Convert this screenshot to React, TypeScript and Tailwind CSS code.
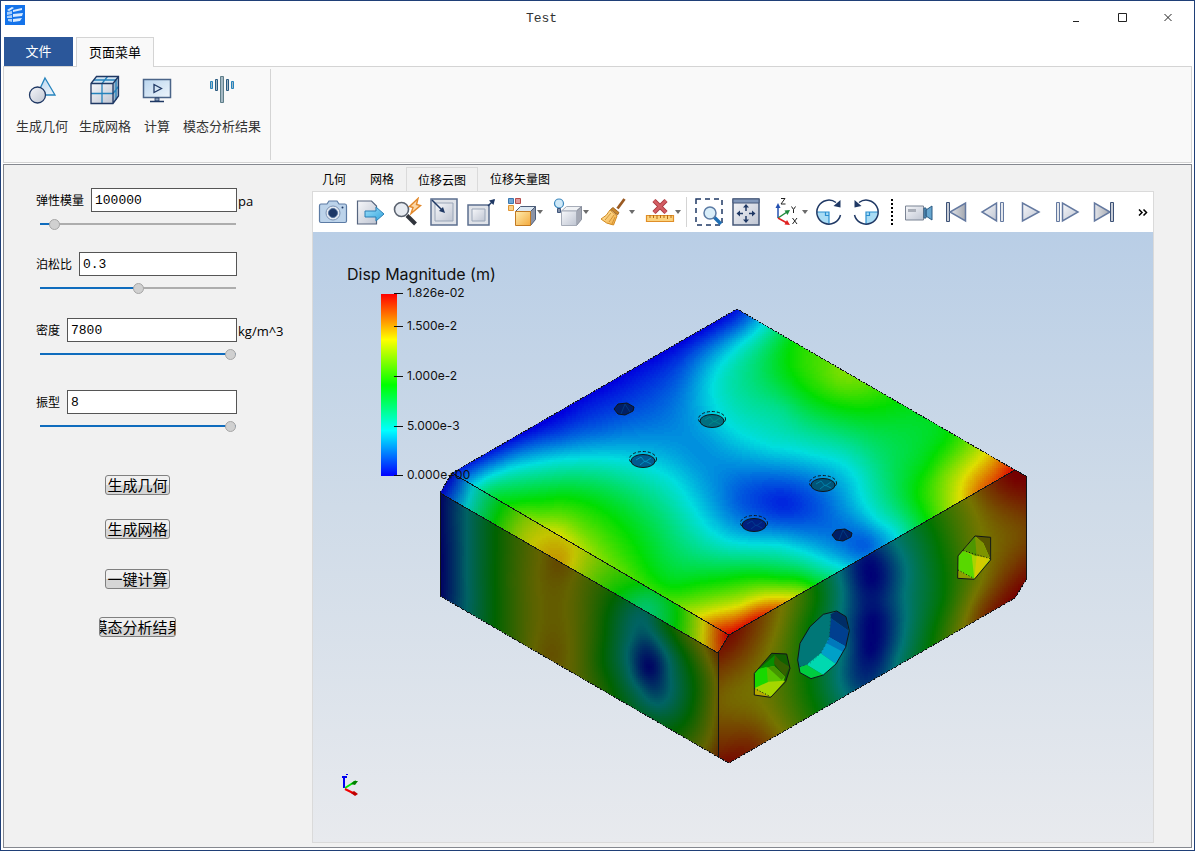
import { useState } from "react"
import type { ReactNode } from "react"

type Sample = [number, number, number]

interface Face {
  id: string
  outline: string
  box: [number, number, number, number]
  light: number
  samples: Sample[]
}

const LEVELS = 160

// Displacement samples: x, y, value in 0..1 (blue to red)
const TOP: Sample[] = [
  [737, 309, 0.02], [700, 331, 0], [640, 365, 0], [580, 400, 0], [520, 434, 0], [470, 462, 0.02], [453, 472, 0.03],
  [660, 358, 0.01], [600, 393, 0.01], [555, 420, 0.01],
  [720, 367, 0.25], [713, 387, 0.25], [723, 417, 0.25], [740, 433, 0.25], [762, 326, 0.25], [740, 345, 0.25],
  [773, 447, 0.25], [813, 455, 0.25], [843, 464, 0.25], [857, 480, 0.25], [863, 500, 0.25], [877, 520, 0.25], [897, 538, 0.25],
  [730, 541, 0.25], [780, 545, 0.25], [813, 555, 0.25], [843, 567, 0.25], [473, 487, 0.25], [513, 468, 0.25], [557, 460, 0.25],
  [600, 458, 0.25], [637, 463, 0.25], [673, 480, 0.25], [693, 507, 0.25], [713, 532, 0.25],
  [513, 503, 0.5], [563, 498, 0.5], [597, 507, 0.5], [622, 527, 0.5], [640, 553, 0.5], [670, 587, 0.5], [697, 583, 0.5], [740, 577, 0.5],
  [780, 578, 0.5], [815, 584, 0.48], [793, 343, 0.5], [792, 373, 0.5], [810, 393, 0.5], [847, 408, 0.5], [897, 402, 0.5],
  [947, 437, 0.5], [927, 467, 0.5], [917, 497, 0.5], [927, 520, 0.5],
  [815, 356, 0.57], [827, 362, 0.6], [843, 374, 0.64], [863, 385, 0.6], [990, 454, 0.78], [970, 470, 0.75], [960, 497, 0.75],
  [997, 473, 0.9], [1013, 470, 0.99], [977, 490, 0.86], [943, 475, 0.62],
  [783, 503, 0.04], [820, 505, 0.1], [740, 500, 0.1], [783, 482, 0.1], [783, 522, 0.1],
  [660, 400, 0.1], [600, 400, 0.03], [600, 430, 0.11], [640, 430, 0.14], [700, 450, 0.16], [560, 438, 0.1], [680, 380, 0.11],
  [700, 350, 0.1], [737, 325, 0.1], [740, 465, 0.16], [850, 535, 0.12], [865, 546, 0.1], [840, 510, 0.15], [720, 490, 0.15],
  [557, 535, 0.75], [523, 519, 0.65], [603, 560, 0.64], [580, 528, 0.62], [540, 515, 0.6],
  [740, 606, 0.75], [703, 616, 0.76], [717, 624, 0.88], [729, 635, 1], [780, 597, 0.75], [803, 591, 0.64], [777, 607, 0.88], [755, 616, 0.94],
  [660, 520, 0.38], [680, 545, 0.37], [720, 560, 0.37], [760, 561, 0.37], [500, 460, 0.13], [600, 480, 0.37], [550, 479, 0.37],
  [492, 488, 0.37], [760, 380, 0.38], [830, 430, 0.37], [880, 460, 0.37], [900, 490, 0.42], [780, 410, 0.34],
]

const CHAMFER: Sample[] = [
  [440, 493, 0], [453, 474, 0.02], [458, 490, 0.12], [468, 503, 0.25], [473, 487, 0.25], [497, 518, 0.5], [504, 504, 0.5],
  [520, 533, 0.68], [540, 543, 0.76], [563, 560, 0.8], [557, 535, 0.75], [577, 560, 0.73], [597, 575, 0.62], [603, 562, 0.63],
  [623, 590, 0.5], [640, 583, 0.5], [647, 605, 0.37], [663, 612, 0.42], [652, 592, 0.44], [677, 615, 0.5], [693, 623, 0.65],
  [703, 631, 0.75], [720, 640, 0.93], [718, 651, 0.9], [728, 636, 1],
]

const LEFT: Sample[] = [
  [440, 493, 0], [440, 545, 0], [440, 596, 0], [452, 550, 0.1], [467, 510, 0.25], [467, 560, 0.25], [467, 610, 0.25],
  [496, 528, 0.5], [495, 580, 0.5], [495, 625, 0.5], [520, 545, 0.65], [520, 600, 0.66], [520, 640, 0.66], [542, 560, 0.76],
  [558, 564, 0.82], [553, 605, 0.77], [550, 654, 0.8], [583, 578, 0.7], [580, 620, 0.69], [578, 672, 0.7],
  [615, 597, 0.5], [605, 635, 0.5], [603, 663, 0.5], [611, 685, 0.5], [650, 717, 0.4], [680, 730, 0.52], [693, 700, 0.5], [693, 680, 0.5],
  [677, 642, 0.5], [663, 625, 0.45], [631, 640, 0.25], [645, 615, 0.27], [648, 667, 0], [657, 705, 0.25], [629, 667, 0.25], [640, 690, 0.25],
  [670, 675, 0.25], [662, 647, 0.25], [707, 680, 0.65], [707, 657, 0.74], [717, 657, 0.86], [717, 753, 0.88], [707, 743, 0.75], [717, 703, 0.77],
  [645, 645, 0.12], [652, 687, 0.12],
]

const RIGHT: Sample[] = [
  [730, 635, 0.98], [730, 761, 0.98], [720, 657, 0.93], [720, 703, 0.8], [720, 750, 0.92], [733, 693, 0.78], [750, 630, 0.9], [750, 740, 0.9],
  [790, 603, 0.7], [780, 627, 0.73], [772, 660, 0.72], [767, 700, 0.73], [793, 722, 0.66], [817, 600, 0.5], [809, 627, 0.5], [808, 660, 0.5],
  [817, 703, 0.48], [842, 588, 0.25], [840, 620, 0.25], [843, 647, 0.25], [843, 690, 0.25], [870, 560, 0.02], [872, 580, 0], [873, 620, 0],
  [870, 650, 0], [862, 680, 0.1], [885, 600, 0.1], [857, 610, 0.11], [885, 552, 0.14], [905, 593, 0.25], [905, 630, 0.25], [897, 660, 0.25],
  [897, 545, 0.25], [930, 523, 0.5], [943, 567, 0.5], [943, 600, 0.5], [931, 643, 0.5], [970, 505, 0.74], [978, 540, 0.73], [979, 580, 0.73],
  [963, 625, 0.74], [1017, 480, 1], [1026, 477, 1], [1026, 533, 0.85], [1002, 535, 0.8], [1023, 580, 0.97], [1013, 600, 1], [985, 613, 0.9],
  [990, 495, 0.87], [1026, 505, 0.92], [1002, 565, 0.83],
]

const FACES: Face[] = [
  { id: "left", outline: "440,493 718,653 718,757 440,596", box: [440, 492, 720, 758], light: 0.39, samples: LEFT },
  {
    id: "right",
    outline: "729,635 1015,470 1026,476 1026,580 1015,598 729,763 718,757 718,653",
    box: [718, 470, 1028, 764],
    light: 0.46,
    samples: RIGHT,
  },
  { id: "chamfer", outline: "452,473 729,635 718,653 440,493", box: [440, 472, 730, 654], light: 0.77, samples: CHAMFER },
  { id: "top", outline: "737,309 1015,470 729,635 452,473", box: [452, 308, 1018, 636], light: 0.87, samples: TOP },
]

function rainbow(v: number, light: number) {
  const t = Math.min(1, Math.max(0, v)) * 4
  const r = Math.min(1, Math.max(0, t - 2))
  const g = t < 1 ? t : t > 3 ? 4 - t : 1
  const b = Math.min(1, Math.max(0, 2 - t))
  return `rgb(${[r, g, b].map((c) => Math.round(c * 255 * light)).join(",")})`
}

// Thin plate spline through the samples, slightly smoothed
function fitSurface(samples: Sample[]) {
  const pts = samples.map(([x, y]) => [(x - 730) / 100, (y - 530) / 100])
  const n = pts.length
  const size = n + 3
  const kernel = (d2: number) => (d2 > 0 ? 0.5 * d2 * Math.log(d2) : 0)
  const m = Array.from({ length: size }, () => new Array<number>(size + 1).fill(0))
  for (let i = 0; i < n; i++) {
    for (let j = 0; j < n; j++) {
      m[i][j] = kernel((pts[i][0] - pts[j][0]) ** 2 + (pts[i][1] - pts[j][1]) ** 2)
    }
    m[i][i] += 0.005
    const base = [1, pts[i][0], pts[i][1]]
    base.forEach((v, k) => {
      m[i][n + k] = v
      m[n + k][i] = v
    })
    m[i][size] = samples[i][2]
  }
  for (let c = 0; c < size; c++) {
    let p = c
    for (let r = c + 1; r < size; r++) if (Math.abs(m[r][c]) > Math.abs(m[p][c])) p = r
    ;[m[c], m[p]] = [m[p], m[c]]
    for (let r = 0; r < size; r++) {
      if (r === c) continue
      const f = m[r][c] / m[c][c]
      if (f === 0) continue
      for (let k = c; k <= size; k++) m[r][k] -= f * m[c][k]
    }
  }
  const w = m.map((row, i) => row[size] / row[i])
  return (px: number, py: number) => {
    const x = (px - 730) / 100
    const y = (py - 530) / 100
    let v = w[n] + w[n + 1] * x + w[n + 2] * y
    for (let i = 0; i < n; i++) v += w[i] * kernel((x - pts[i][0]) ** 2 + (y - pts[i][1]) ** 2)
    return v
  }
}

// One path per colour level, built from horizontal runs two units tall
function buildBands({ box, light, samples }: Face) {
  const at = fitSurface(samples)
  const paths = new Map<number, string>()
  for (let y = box[1]; y < box[3]; y += 2) {
    let start = box[0]
    let level = -1
    for (let x = box[0]; x <= box[2]; x += 2) {
      const next = x >= box[2] ? -2 : Math.round(Math.min(1, Math.max(0, at(x + 1, y + 1))) * LEVELS)
      if (next === level) continue
      if (level >= 0) paths.set(level, (paths.get(level) ?? "") + `M${start} ${y}H${x}V${y + 2}H${start}z`)
      start = x
      level = next
    }
  }
  return [...paths].map(([level, d]) => ({ d, fill: rainbow(level / LEVELS, light) }))
}

const SHADED = FACES.map((face) => ({ ...face, bands: buildBands(face) }))

const TICKS = [
  { y: 293, text: "1.826e-02" },
  { y: 326, text: "1.500e-2" },
  { y: 376, text: "1.000e-2" },
  { y: 426, text: "5.000e-3" },
  { y: 475, text: "0.000e+00" },
]

function RoundHole({ x, y, fill, shine }: { x: number; y: number; fill: string; shine: string }) {
  return (
    <g stroke="#101418">
      <ellipse cx={x} cy={y - 1} rx="13.5" ry="7.5" fill="none" strokeDasharray="3 2" />
      <ellipse cx={x} cy={y + 1} rx="12" ry="6.5" fill={fill} />
      <path d={`M${x - 7} ${y}l5 -3 4 5 6 -4 M${x - 3} ${y + 5}l5 -4 6 3`} stroke={shine} fill="none" />
    </g>
  )
}

function SmallHole({ x, y }: { x: number; y: number }) {
  return (
    <g stroke="#101418">
      <path d={`M${x - 10} ${y}l4 -5 9 -1 7 4 -1 4 -8 4 -7 -1z`} fill="#001f66" />
      <path d={`M${x - 3} ${y + 5}l4 -10 5 8`} fill="none" stroke="#003a80" />
    </g>
  )
}

function Model() {
  return (
    <svg viewBox="313 232 840 608" className="block w-full" role="img" aria-label="Disp Magnitude">
      <defs>
        <linearGradient id="legend" x1="0" y1="1" x2="0" y2="0">
          <stop offset="0" stopColor="#00f" />
          <stop offset="0.25" stopColor="#0ff" />
          <stop offset="0.5" stopColor="#0f0" />
          <stop offset="0.75" stopColor="#ff0" />
          <stop offset="1" stopColor="#f00" />
        </linearGradient>
        {SHADED.map((face) => (
          <clipPath key={face.id} id={`clip-${face.id}`}>
            <polygon points={face.outline} />
          </clipPath>
        ))}
      </defs>

      {SHADED.map((face) => (
        <g key={face.id} clipPath={`url(#clip-${face.id})`} shapeRendering="crispEdges">
          {face.bands.map((band) => (
            <path key={band.fill} d={band.d} fill={band.fill} />
          ))}
        </g>
      ))}

      {/* Feature edges */}
      <g fill="none" stroke="#101418" shapeRendering="crispEdges">
        <path d="M452 473L729 635L718 653L440 493V596M718 653V757M729 635L1015 470L1026 476V580" />
        <path d="M440 493L452 473L737 309L1015 470M1026 580L1015 598L729 763L718 757L440 596" strokeDasharray="2 1" />
      </g>

      <SmallHole x={624} y={409} />
      <RoundHole x={712} y={420} fill="#006f80" shine="#008a88" />
      <RoundHole x={643} y={460} fill="#005a90" shine="#0090c0" />
      <RoundHole x={823} y={484} fill="#00557a" shine="#0080a8" />
      <RoundHole x={754} y={524} fill="#001f80" shine="#003a90" />
      <SmallHole x={842} y={535} />

      {/* Side bores */}
      <g transform="translate(700 560) scale(0.3333)">
        <path d="M215 280L260 282L270 325L257 365L222 348L175 328z" fill="#126000" />
        <path d="M175 328L225 285L222 348z" fill="#078c00" />
        <path d="M225 285L222 310L255 350L268 320L240 302z" fill="#356000" />
        <path d="M175 328L222 318L255 350L250 365L212 412L163 385V340z" fill="#58c400" />
        <path d="M175 328L200 320L206 400L163 385V340z" fill="#18d800" />
        <path d="M203 322L222 318L255 350L245 360z" fill="#449600" />
        <path d="M163 385L206 365L255 362L212 412z" fill="#a5d600" />
        <path d="M163 385L212 412L163 405z" fill="#b6aa00" />
        <path d="M163 385L212 410" stroke="#101418" strokeWidth="3" strokeDasharray="3 6" />
        <path
          d="M215 280L260 282L270 325L257 365L212 412L163 405V340z"
          fill="none"
          stroke="#101418"
          strokeWidth="3"
        />

        <path d="M370 163L410 153L438 170L448 212L437 262L408 312L370 345L333 356L300 338L293 300L300 250L330 200z" fill="#007777" />
        <path d="M392 163L410 153L438 170L446 212L393 175z" fill="#002d66" />
        <path d="M393 175L446 212L438 260L388 232z" fill="#003f8f" />
        <path d="M388 232L438 260L408 312L362 280z" fill="#00a0c8" />
        <path d="M388 232L438 260L430 276L380 250z" fill="#0078bc" />
        <path d="M362 280L408 312L370 345L320 314z" fill="#00d8b0" />
        <path d="M320 314L370 345L333 356L300 338L298 322z" fill="#00cc40" />
        <path d="M300 320L330 310L362 280L388 235L392 163" fill="none" stroke="#104040" strokeWidth="2" strokeDasharray="3 8" />
        <path
          d="M370 163L410 153L438 170L448 212L437 262L408 312L370 345L333 356L300 338L293 300L300 250L330 200z"
          fill="none"
          stroke="#101418"
          strokeWidth="3"
        />
      </g>
      <g transform="translate(730 300) scale(0.3333)">
        <path d="M735 708L782 712V780L733 838L683 835L684 768z" fill="#9ad000" />
        <path d="M735 708L782 712L780 775L760 730z" fill="#575500" />
        <path d="M735 708L760 730L780 775L735 768L700 752z" fill="#7e9400" />
        <path d="M735 708L740 768L700 752z" fill="#4e9600" />
        <path d="M700 752L735 768L780 775L733 838L684 810V768z" fill="#a8d400" />
        <path d="M700 752L725 765L733 838L684 810V768z" fill="#58d800" />
        <path d="M740 768L780 775L733 838z" fill="#d2cc00" />
        <path d="M684 810L733 838L683 835z" fill="#8ba200" />
        <path d="M684 810L733 836M700 752L780 776" stroke="#101418" strokeWidth="3" strokeDasharray="3 6" />
        <path d="M735 708L782 712V780L733 838L683 835L684 768z" fill="none" stroke="#101418" strokeWidth="3" />
      </g>

      {/* Colour legend */}
      <text x="347" y="280" fontSize="16" fill="#101010" className="font-['Inter',sans-serif]">
        Disp Magnitude (m)
      </text>
      <rect x="381" y="294" width="16" height="182" fill="url(#legend)" />
      {TICKS.map((tick) => (
        <g key={tick.text}>
          <path d={`M394 ${tick.y + 0.5}H403`} stroke="#101010" />
          <text x="407" y={tick.y + 4} fontSize="12" fill="#101010" className="font-['Inter',sans-serif]">
            {tick.text}
          </text>
        </g>
      ))}

      {/* Orientation triad */}
      <path d="M344 788V776M342 777h5M347 774v1" stroke="#0000f0" strokeWidth="2" />
      <path d="M345 788l11 -7" stroke="#00e800" strokeWidth="2" />
      <path d="M351 784l3 -3 4 0 -3 4z" fill="#008000" />
      <path d="M345 789l10 5" stroke="#f00000" strokeWidth="2" />
      <path d="M351 793l3 -2 4 3 -3 2z" fill="#c00000" />
    </svg>
  )
}

function Icon({ children, size = 30 }: { children: ReactNode; size?: number }) {
  return (
    <svg width={size} height={size} viewBox="0 0 30 30" fill="none" aria-hidden="true" className="shrink-0">
      {children}
    </svg>
  )
}

const NAVY = "#1f3864"

function SharedGradients() {
  return (
    <svg width="0" height="0" aria-hidden="true" className="absolute">
      <defs>
        <linearGradient id="steel" x1="0" y1="0" x2="1" y2="1">
          <stop offset="0" stopColor="#f6f7fa" />
          <stop offset="1" stopColor="#bfc5d2" />
        </linearGradient>
        <linearGradient id="sky" x1="0" y1="0" x2="1" y2="1">
          <stop offset="0" stopColor="#b9d5ee" />
          <stop offset="1" stopColor="#eef5fb" />
        </linearGradient>
        <linearGradient id="gold" x1="0" y1="0" x2="1" y2="1">
          <stop offset="0" stopColor="#ffedb0" />
          <stop offset="1" stopColor="#f3a93c" />
        </linearGradient>
        <linearGradient id="azure" x1="0" y1="0" x2="1" y2="1">
          <stop offset="0" stopColor="#9fe0fb" />
          <stop offset="1" stopColor="#31a4dc" />
        </linearGradient>
        <linearGradient id="metal" x1="0" y1="0" x2="1" y2="0">
          <stop offset="0" stopColor="#e3e5ea" />
          <stop offset="1" stopColor="#a4a8b0" />
        </linearGradient>
      </defs>
    </svg>
  )
}

const RIBBON = [
  {
    label: "生成几何",
    icon: (
      <>
        <path d="M18 3L28 20H10z" fill="url(#sky)" stroke="#2583bd" strokeWidth="1.3" />
        <circle cx="10.500" cy="20" r="8" fill="url(#steel)" stroke={NAVY} strokeWidth="1.3" />
      </>
    ),
  },
  {
    label: "生成网格",
    icon: (
      <>
        <path d="M1 8.500L6.500 1.500H28.500L23 8.500z" fill="#d3e5f3" />
        <path d="M23 8.500L28.500 1.500V21L23 28.500z" fill="#9cb6ca" />
        <path d="M1 8.500H23V28.500H1z" fill="url(#steel)" />
        <path d="M1 18.500H23L28.500 11.500M12 28.500V8.500L17.500 1.500M4 5H26V25" stroke="#2583bd" strokeWidth="1.3" />
        <path d="M1 8.500L6.500 1.500H28.500V21L23 28.500H1zM1 8.500H23V28.500M23 8.500L28.500 1.500" stroke={NAVY} strokeWidth="1.3" />
      </>
    ),
  },
  {
    label: "计算",
    icon: (
      <>
        <path d="M1.500 4.500H28.500V22.500H1.500z" fill="url(#sky)" stroke="#4a6488" strokeWidth="1.5" />
        <path d="M12 9.500L19.500 13.500L12 17.500z" stroke={NAVY} strokeWidth="1.3" />
        <path d="M13 23H17V26H13z" fill="#8fa3bb" stroke={NAVY} strokeWidth="0.8" />
        <path d="M8 26.500H22" stroke={NAVY} strokeWidth="1.5" />
      </>
    ),
  },
  {
    label: "模态分析结果",
    icon: (
      <g fill="#a5b8c4" strokeWidth="1">
        <path d="M3.500 6.500h2v7h-2z" stroke="#2583bd" />
        <path d="M8.500 4.500h2v11h-2z" stroke="#2a5a80" />
        <path d="M13.500 1.500h3v26h-3z" stroke="#5f7f8a" />
        <path d="M19.500 4.500h2v11h-2z" stroke="#2a5a80" />
        <path d="M24.500 6.500h2v7h-2z" stroke="#2583bd" />
      </g>
    ),
  },
]

interface Tool {
  name: string
  icon: ReactNode
  menu?: boolean
}

const VIEW_TOOLS: Tool[] = [
  {
    name: "Screenshot",
    icon: (
      <>
        <path d="M3 7h6l2-3h8l2 3h6q1.500 0 1.500 2v15q0 1.500-1.500 1.500H3q-1.500 0-1.500-1.500V9q0-2 1.500-2z" fill="#bcd3ea" stroke="#5c7ba4" strokeWidth="1.200" />
        <circle cx="15" cy="16" r="7" fill="#e4eaf2" stroke="#7c93b4" />
        <circle cx="15" cy="16" r="4.500" fill="#1d3766" stroke="#52709c" />
        <circle cx="24.500" cy="10.500" r="1" fill={NAVY} />
      </>
    ),
  },
  {
    name: "Export",
    icon: (
      <>
        <path d="M2.500 4h14l5 5v18h-19z" fill="url(#steel)" stroke="#56657f" strokeWidth="1.200" />
        <path d="M10 14h11v-4l8 7-8 7v-4H10z" fill="url(#azure)" stroke="#2b7fb5" />
      </>
    ),
  },
  {
    name: "Quick zoom",
    icon: (
      <>
        <path d="M15 18.500l8.500 8.500" stroke="#30343c" strokeWidth="4" />
        <circle cx="9.500" cy="12.500" r="7" fill="#e7ebf1" stroke="#5b6370" strokeWidth="1.600" />
        <path d="M26 1.500L17.500 9.500l3.500 1-2 6L28.500 8.500l-4-1z" fill="#fbd7a8" stroke="#e2882a" strokeWidth="1.400" />
      </>
    ),
  },
  {
    name: "Fit inside",
    icon: (
      <>
        <path d="M2 2h26v26H2z" fill="#dfe2e8" stroke="#5c6f8f" strokeWidth="1.500" />
        <path d="M6 6h18v18H6z" fill="url(#steel)" stroke="#9aa6b8" />
        <path d="M3 3l11 11" stroke={NAVY} strokeWidth="1.500" />
        <path d="M16 16l-6-2 4-4z" fill={NAVY} />
      </>
    ),
  },
  {
    name: "Fit outside",
    icon: (
      <>
        <path d="M2 8h21v20H2z" fill="#dfe2e8" stroke="#5c6f8f" strokeWidth="1.500" />
        <path d="M6 12h13v12H6z" fill="url(#steel)" stroke="#9aa6b8" />
        <path d="M22 9l6-6" stroke={NAVY} strokeWidth="1.500" />
        <path d="M29 2l-1.500 6-4.500-4.500z" fill={NAVY} />
      </>
    ),
  },
  {
    name: "Display blocks",
    menu: true,
    icon: (
      <>
        <path d="M1.500 1.500h5v5h-5z" fill="#6fa5d4" stroke="#3a78b0" />
        <path d="M8.500 1.500h5v5h-5z" fill="#e09a9a" stroke="#b54a4a" />
        <path d="M1.500 8.500h5v5h-5z" fill="#f8d08a" stroke="#e09432" />
        <path d="M8.500 14.500l5-5h15l-5 5z" fill="#dde8f2" stroke="#4c5c78" />
        <path d="M23.500 14.500l5-5v13l-5 6z" fill="#8b93a5" stroke="#4c5c78" />
        <path d="M8.500 14.500h15v14h-15z" fill="url(#gold)" stroke="#c37a22" />
      </>
    ),
  },
  {
    name: "Light",
    menu: true,
    icon: (
      <>
        <path d="M8.500 14l5-4.500h15l-5 4.500z" fill="#f0f2f5" stroke="#a6acb8" />
        <path d="M23.500 14l5-4.500v13l-5 6z" fill="#a4a8b4" stroke="#888e9c" />
        <path d="M8.500 14h15v14.500h-15z" fill="url(#steel)" stroke="#a6acb8" />
        <circle cx="6" cy="6.500" r="4.500" fill="#cfe9f8" stroke="#3b87bd" strokeWidth="1.200" />
        <path d="M4.500 11.500h3v4h-3z" fill="#8090a8" stroke={NAVY} strokeWidth="0.800" />
      </>
    ),
  },
  {
    name: "Clean",
    menu: true,
    icon: (
      <>
        <path d="M25.500 2l-7 9.500" stroke="#9a5a22" strokeWidth="2.800" />
        <path d="M14 10.500l6 5-1.500 2.500-7-5.500z" fill="#c8862c" stroke="#8f5614" strokeWidth="0.800" />
        <path d="M11 13l7 6-3.500 9Q7 27 2 22q6-3 9-9z" fill="url(#gold)" stroke="#d28a22" />
        <path d="M6 23l6-7M10 25l5-7M13 27l3-7" stroke="#c8862c" strokeWidth="0.800" />
      </>
    ),
  },
  {
    name: "Clear measurement",
    menu: true,
    icon: (
      <>
        <path d="M9 3.500l12 12M21 3.500l-12 12" stroke="#a8393f" strokeWidth="4.500" />
        <path d="M9 3.500l12 12M21 3.500l-12 12" stroke="#d35d63" strokeWidth="2.500" />
        <path d="M1.500 18.500h27v6h-27z" fill="#fbd27c" stroke="#e08e28" strokeWidth="1.200" />
        <path d="M5 18v3M8.500 18v3M12 18v4M15.500 18v3M19 18v3M22.500 18v4M26 18v3" stroke="#b66a12" />
      </>
    ),
  },
]

const CAMERA_TOOLS: Tool[] = [
  {
    name: "Zoom box",
    icon: (
      <>
        <path d="M2 2h26v26H2z" stroke={NAVY} strokeWidth="1.500" strokeDasharray="5 4" />
        <path d="M20 20l7 7" stroke="#1f6fb5" strokeWidth="3.500" />
        <circle cx="16" cy="16" r="6" fill="#d9eef9" stroke="#5c7ba4" strokeWidth="1.500" />
      </>
    ),
  },
  {
    name: "Fit window",
    icon: (
      <>
        <path d="M2 2h26v26H2z" fill="url(#steel)" stroke="#47597a" strokeWidth="1.500" />
        <path d="M2 2h26v4H2z" fill="#8298ba" stroke="#47597a" />
        <path d="M15 9v5M15 19v5M7 16.500h5M18 16.500h5" stroke={NAVY} strokeWidth="1.500" />
        <path d="M15 7l3 3.500h-6zM15 26l3-3.500h-6zM5.500 16.500l3.500-3v6zM24.500 16.500l-3.500-3v6z" fill={NAVY} />
      </>
    ),
  },
  {
    name: "Axis view",
    menu: true,
    icon: (
      <>
        <path d="M6 21V9" stroke="#2350b0" strokeWidth="1.500" />
        <path d="M6 6l2.500 5h-5z" fill="#2350b0" />
        <path d="M6 21l9-6" stroke="#1d8a3c" strokeWidth="1.500" />
        <path d="M18 13l-2.500 5-3-4.500z" fill="#1d8a3c" />
        <path d="M6 21l9 5" stroke="#e02020" strokeWidth="1.500" />
        <path d="M18 28l-5.500-.5 2.500-4.500z" fill="#e02020" />
        <path d="M9 1.500h4l-4 5.500h4.500M19.500 9.500l2 3 2-3M21.500 12.500v3.500M20.500 21l4.500 6M25 21l-4.500 6" stroke="#222" />
      </>
    ),
  },
  {
    name: "Rotate clockwise",
    icon: (
      <>
        <path d="M3 15h12v12Q4 26 3 15z" fill="#a9dcf5" />
        <path d="M3 15h12v12M11.500 15v3.500H15" stroke="#2b8fd0" strokeWidth="1.200" />
        <path d="M26.500 18A12 12 0 1 1 22 5.500" stroke={NAVY} strokeWidth="1.500" />
        <path d="M26.500 3v7.500l-7-1.500z" fill={NAVY} />
      </>
    ),
  },
  {
    name: "Rotate counterclockwise",
    icon: (
      <>
        <path d="M27 15H15v12Q26 26 27 15z" fill="#a9dcf5" />
        <path d="M27 15H15v12M18.500 15v3.500H15" stroke="#2b8fd0" strokeWidth="1.200" />
        <path d="M3.500 18A12 12 0 1 0 8 5.500" stroke={NAVY} strokeWidth="1.500" />
        <path d="M3.500 3v7.500l7-1.500z" fill={NAVY} />
      </>
    ),
  },
]

const PLAY_TOOLS: Tool[] = [
  {
    name: "Record",
    icon: (
      <>
        <path d="M1.500 9h18v14h-18z" fill="url(#steel)" stroke="#7b8494" />
        <path d="M4 12h8v3H4z" fill="#a9aeb8" />
        <path d="M20 11h2v10h-2zM22 13l6-4v14l-6-4z" fill="#67a6cf" stroke="#2c5b82" />
      </>
    ),
  },
  {
    name: "First frame",
    icon: (
      <>
        <path d="M5.500 5.500h3v19h-3z" fill="#c8cdd6" stroke="#3d5277" />
        <path d="M24.500 6v18L9 15z" fill="url(#metal)" stroke="#6479a0" strokeWidth="1.500" />
      </>
    ),
  },
  {
    name: "Previous frame",
    icon: (
      <>
        <path d="M18.500 6v18L4 15z" fill="url(#steel)" stroke="#6479a0" strokeWidth="1.500" />
        <path d="M22.500 5.500h3v19h-3z" fill="#e3e6eb" stroke="#6479a0" />
      </>
    ),
  },
  { name: "Play", icon: <path d="M7.500 6v18L24 15z" fill="url(#steel)" stroke="#6479a0" strokeWidth="1.500" /> },
  {
    name: "Next frame",
    icon: (
      <>
        <path d="M4.500 5.500h3v19h-3z" fill="#e3e6eb" stroke="#6479a0" />
        <path d="M10.500 6v18L26 15z" fill="url(#steel)" stroke="#6479a0" strokeWidth="1.500" />
      </>
    ),
  },
  {
    name: "Last frame",
    icon: (
      <>
        <path d="M5.500 6v18L21 15z" fill="url(#metal)" stroke="#6479a0" strokeWidth="1.500" />
        <path d="M21.500 5.500h3v19h-3z" fill="#c8cdd6" stroke="#3d5277" />
      </>
    ),
  },
]

function ToolButton({ tool }: { tool: Tool }) {
  return (
    <button
      type="button"
      aria-label={tool.name}
      className={tool.menu ? "flex h-9 w-[46px] shrink-0 items-center justify-end pr-0.5" : "flex h-9 w-[37px] shrink-0 items-center justify-center"}
    >
      <Icon>{tool.icon}</Icon>
      {tool.menu && (
        <svg width="6" height="4" viewBox="0 0 6 4" aria-hidden="true">
          <path d="M0 0H6L3 4z" fill="#6b6b6b" />
        </svg>
      )}
    </button>
  )
}

interface FieldProps {
  id: string
  label: string
  initial: string
  level: number
  unit?: string
}

function Field({ id, label, initial, level, unit }: FieldProps) {
  const [value, setValue] = useState(initial)
  const [position, setPosition] = useState(level)
  return (
    <div className="flex flex-col gap-1.5">
      <div className="flex h-6 items-center gap-px">
        <div className="flex w-[201px] shrink-0 gap-[7px]">
          <label htmlFor={id} className="shrink-0 text-xs leading-6">
            {label}
          </label>
          <input
            id={id}
            value={value}
            onChange={(e) => setValue(e.target.value)}
            className="h-6 min-w-0 flex-1 border border-[#555] bg-white px-[3px] font-['Liberation_Mono',monospace] text-[13px] outline-none"
          />
        </div>
        {unit && <span className="pt-1 font-['Open_Sans',sans-serif] text-[13px]">{unit}</span>}
      </div>
      <input
        type="range"
        aria-label={label}
        min={0}
        max={100}
        value={position}
        onChange={(e) => setPosition(Number(e.target.value))}
        className="ml-1 h-3 w-[196px] appearance-none bg-[length:100%_2px] bg-center bg-no-repeat [&::-webkit-slider-thumb]:size-[11px] [&::-webkit-slider-thumb]:appearance-none [&::-webkit-slider-thumb]:rounded-full [&::-webkit-slider-thumb]:border [&::-webkit-slider-thumb]:border-[#a6a6a6] [&::-webkit-slider-thumb]:bg-[#d0d0d0]"
        style={{ backgroundImage: `linear-gradient(to right, #0f6cbd ${position}%, #adadad ${position}%)` }}
      />
    </div>
  )
}

function ActionButton({ children, wide }: { children: string; wide?: boolean }) {
  return (
    <button
      type="button"
      className={`flex h-5 items-center justify-center overflow-hidden rounded-[3px] border border-[#808080] bg-linear-to-b from-[#f0f0f0] from-50% to-[#d6d6d6] to-50% text-[15px] whitespace-nowrap text-black ${wide ? "w-[77px]" : "w-[65px]"}`}
    >
      {children}
    </button>
  )
}

const TABS = ["几何", "网格", "位移云图", "位移矢量图"]

export default function App() {
  const [tab, setTab] = useState("位移云图")

  return (
    <div className="flex min-h-screen flex-col border border-[#1f3f77] bg-white px-0.5 pb-0.5 font-['Noto_Sans_CJK_SC',sans-serif] text-black">
      <SharedGradients />

      {/* Title bar */}
      <header className="flex h-9 items-start">
        <svg width="20" height="20" viewBox="0 0 20 20" aria-hidden="true" className="mt-1 ml-0.5">
          <path d="M0 0h20v20H0z" fill="#1473ea" />
          <path d="M2 5l5-3 2 1-5 3zM8 5l9-2v2L8 7zM8 9l10-1-1 3-9 1zM8 14l9-1-2 3-7 1z" fill="#d9ebff" />
          <path d="M2 7l5-1v3l-5 1zM2 11l5-1v3l-5 0zM3 14l4 0v3l-4-1z" fill="#a9cffb" />
        </svg>
        <h1 className="flex-1 pl-1 text-center font-['Liberation_Mono',monospace] text-[13px] leading-9 text-[#333]">Test</h1>
        <div className="flex pt-px">
          <button type="button" aria-label="Minimize" className="flex h-8 w-[46px] items-center justify-center">
            <svg width="10" height="10" viewBox="0 0 10 10" stroke="#222">
              <path d="M1 8.500H7" />
            </svg>
          </button>
          <button type="button" aria-label="Maximize" className="flex h-8 w-[46px] items-center justify-center">
            <svg width="10" height="10" viewBox="0 0 10 10" stroke="#222" fill="none">
              <path d="M0.500 0.500H8.500V8.500H0.500z" />
            </svg>
          </button>
          <button type="button" aria-label="Close" className="flex h-8 w-[46px] items-center justify-center">
            <svg width="10" height="10" viewBox="0 0 10 10" stroke="#222">
              <path d="M0.500 1L7.500 8M7.500 1L0.500 8" />
            </svg>
          </button>
        </div>
      </header>

      {/* Ribbon */}
      <nav className="relative z-10 -mb-px flex gap-[3px] pl-px text-[13px]">
        <button type="button" className="h-[29px] w-[69px] bg-[#2b579a] pb-0.5 text-white">
          文件
        </button>
        <button type="button" className="h-[30px] w-[78px] border border-b-0 border-[#d4d4d4] bg-[#f9f9f9] pb-0.5">
          页面菜单
        </button>
      </nav>
      <section className="flex h-[97px] border border-[#d4d4d4] bg-[#f9f9f9] py-0.5">
        <div className="flex items-start gap-[11px] border-r border-[#d4d4d4] pr-[9px] pl-3">
          {RIBBON.map((item) => (
            <button key={item.label} type="button" className="flex flex-col items-center gap-[11px] pt-1.5 text-[13px] leading-5 text-[#333]">
              <Icon>{item.icon}</Icon>
              {item.label}
            </button>
          ))}
        </div>
      </section>

      <main className="mt-px flex flex-1 border border-[#85888f] bg-[#f1f1f1]">
        {/* Parameters */}
        <aside className="w-[306px] shrink-0 pt-[23px] pl-8">
          <form className="flex flex-col" onSubmit={(e) => e.preventDefault()}>
            <Field id="modulus" label="弹性模量" initial="100000" level={5} unit="pa" />
            <div className="mt-[22px]">
              <Field id="poisson" label="泊松比" initial="0.3" level={50} />
            </div>
            <div className="mt-6">
              <Field id="density" label="密度" initial="7800" level={100} unit="kg/m^3" />
            </div>
            <div className="mt-[30px]">
              <Field id="mode" label="振型" initial="8" level={100} />
            </div>
            <div className="mt-[43px] flex w-[203px] flex-col items-center gap-6">
              <ActionButton>生成几何</ActionButton>
              <ActionButton>生成网格</ActionButton>
              <div className="mt-1.5">
                <ActionButton>一键计算</ActionButton>
              </div>
              <div className="mt-1">
                <ActionButton wide>模态分析结果</ActionButton>
              </div>
            </div>
          </form>
        </aside>

        {/* Result viewer */}
        <section className="flex min-w-0 flex-1 flex-col pr-[37px] pb-1">
          <div role="tablist" className="flex pt-0.5 text-xs">
            {TABS.map((name) => (
              <button
                key={name}
                type="button"
                role="tab"
                aria-selected={name === tab}
                onClick={() => setTab(name)}
                className={
                  name === tab
                    ? "h-6 border-x border-t border-[#dadada] px-[11px]"
                    : "h-6 px-3"
                }
              >
                {name}
              </button>
            ))}
          </div>
          <div className="ml-0.5 flex flex-1 flex-col border border-[#dadada]">
            <div role="toolbar" className="flex h-10 items-center overflow-hidden bg-white pl-px">
              {VIEW_TOOLS.map((tool) => (
                <ToolButton key={tool.name} tool={tool} />
              ))}
              <span className="mx-[3px] h-[30px] w-px shrink-0 bg-[#d4d4d4]" />
              {CAMERA_TOOLS.map((tool) => (
                <ToolButton key={tool.name} tool={tool} />
              ))}
              <span className="mx-[7px] h-[26px] shrink-0 border-l-2 border-dotted border-black" />
              {PLAY_TOOLS.map((tool) => (
                <ToolButton key={tool.name} tool={tool} />
              ))}
              <button type="button" aria-label="More" className="mr-1 ml-auto flex size-3 shrink-0 items-center justify-center">
                <svg width="10" height="7" viewBox="0 0 10 7" fill="none" stroke="#000" strokeWidth="1.500">
                  <path d="M1 0.500L4 3.500L1 6.500M5.500 0.500L8.500 3.500L5.500 6.500" />
                </svg>
              </button>
            </div>
            <div className="flex-1 bg-linear-to-b from-[#b9cee6] via-[#cfdbe8] via-45% to-[#e8eaee]">
              <Model />
            </div>
          </div>
        </section>
      </main>
    </div>
  )
}
